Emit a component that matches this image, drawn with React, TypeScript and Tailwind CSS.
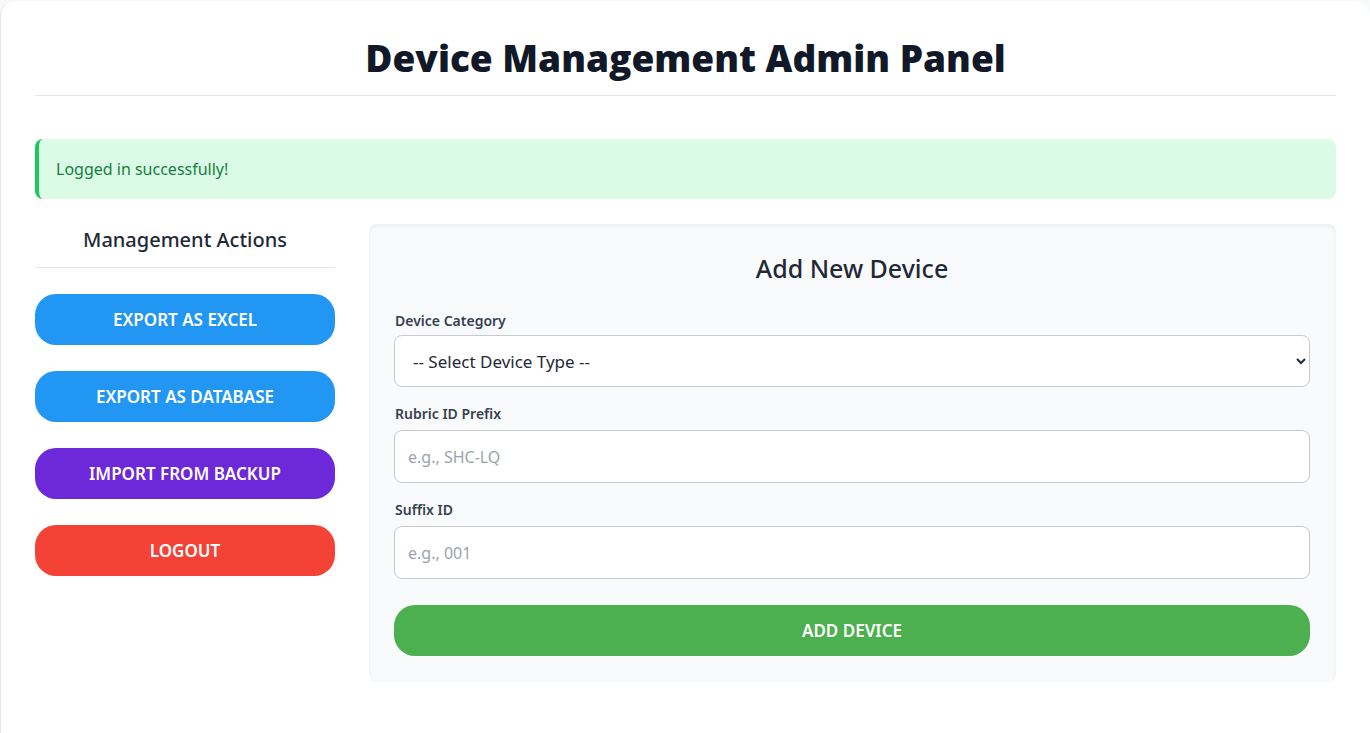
import type { ReactNode } from 'react';

const buttonBase =
  'h-[51px] w-full rounded-[21px] pt-px text-[17px] font-semibold uppercase leading-6 text-white';
const labelBase = 'block pl-px text-sm font-semibold leading-5 text-[#374151]';
const fieldBase =
  'w-full rounded-lg border border-[#c8cacd] bg-white text-[#1f2937] placeholder:text-[#9ca3af]';

function ActionButton({ color, children }: { color: string; children: ReactNode }) {
  return (
    <button type="button" className={`${buttonBase} ${color}`}>
      {children}
    </button>
  );
}

function TextField({ id, label, placeholder }: { id: string; label: string; placeholder: string }) {
  return (
    <div className="flex flex-col gap-1.5">
      <label htmlFor={id} className={labelBase}>
        {label}
      </label>
      <input id={id} type="text" placeholder={placeholder} className={`${fieldBase} h-[53px] px-[13px] text-base`} />
    </div>
  );
}

export default function App() {
  return (
    <div className="min-h-screen bg-[#f8f9fa] font-['Noto_Sans','Open_Sans',sans-serif]">
      <main className="min-h-screen rounded-t-2xl border-l border-t border-l-[#e5e6e8] border-t-[#f5f6f7] bg-white px-[34px] pt-[33px] pb-[50px]">
        <h1 className="border-b border-[#e5e7eb] pb-[13px] text-center font-['Open_Sans','Noto_Sans',sans-serif] text-[37px] font-extrabold leading-12 text-[#111827]">
          Device Management Admin Panel
        </h1>

        <div
          role="status"
          className="mt-[43px] rounded-lg border-l-4 border-[#22c55e] bg-[#dcfbe7] px-[17px] py-[18px] text-base leading-6 text-[#15803d]"
        >
          Logged in successfully!
        </div>

        <div className="mt-[25px] flex items-start gap-[34px]">
          <aside className="w-[300px] shrink-0">
            <h2 className="border-b border-[#e5e7eb] pb-[11px] text-center text-xl font-medium leading-8 text-[#1f2937]">
              Management Actions
            </h2>
            <div className="mt-[26px] flex flex-col gap-[26px]">
              <ActionButton color="bg-[#2196f3]">Export as Excel</ActionButton>
              <ActionButton color="bg-[#2196f3]">Export as Database</ActionButton>
              <ActionButton color="bg-[#6d28d9]">Import from Backup</ActionButton>
              <ActionButton color="bg-[#f44336]">Logout</ActionButton>
            </div>
          </aside>

          <section className="min-w-0 flex-1 rounded-lg bg-[#f9fafb] pt-[26px] pr-[26px] pb-[26px] pl-[25px] shadow-[inset_0_2px_5px_rgba(0,0,0,0.05)]">
            <h2 className="text-center text-[25px] font-medium leading-9 text-[#1f2937]">Add New Device</h2>
            <form className="mt-[25px] flex flex-col gap-[17px]" onSubmit={(e) => e.preventDefault()}>
              <div className="flex flex-col gap-1">
                <label htmlFor="category" className={labelBase}>
                  Device Category
                </label>
                <select id="category" defaultValue="" className={`${fieldBase} h-[52px] pl-[14px] pr-px text-[17px]`}>
                  <option value="">-- Select Device Type --</option>
                </select>
              </div>
              <TextField id="prefix" label="Rubric ID Prefix" placeholder="e.g., SHC-LQ" />
              <TextField id="suffix" label="Suffix ID" placeholder="e.g., 001" />
              <button type="submit" className={`${buttonBase} mt-[9px] bg-[#4caf50]`}>
                Add Device
              </button>
            </form>
          </section>
        </div>
      </main>
    </div>
  );
}
